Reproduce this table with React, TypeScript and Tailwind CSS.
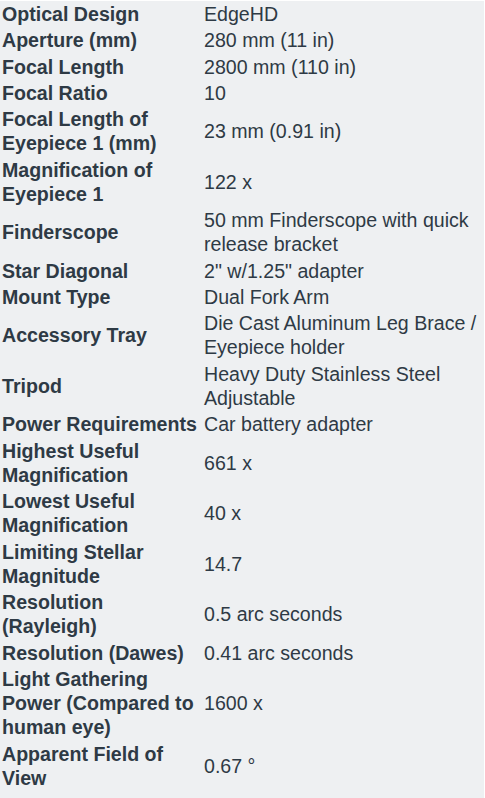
import React from "react";

const rows: [string, string][] = [
  ["Optical Design", "EdgeHD"],
  ["Aperture (mm)", "280 mm (11 in)"],
  ["Focal Length", "2800 mm (110 in)"],
  ["Focal Ratio", "10"],
  ["Focal Length of Eyepiece 1 (mm)", "23 mm (0.91 in)"],
  ["Magnification of Eyepiece 1", "122 x"],
  ["Finderscope", "50 mm Finderscope with quick release bracket"],
  ["Star Diagonal", "2\" w/1.25\" adapter"],
  ["Mount Type", "Dual Fork Arm"],
  ["Accessory Tray", "Die Cast Aluminum Leg Brace / Eyepiece holder"],
  ["Tripod", "Heavy Duty Stainless Steel Adjustable"],
  ["Power Requirements", "Car battery adapter"],
  ["Highest Useful Magnification", "661 x"],
  ["Lowest Useful Magnification", "40 x"],
  ["Limiting Stellar Magnitude", "14.7"],
  ["Resolution (Rayleigh)", "0.5 arc seconds"],
  ["Resolution (Dawes)", "0.41 arc seconds"],
  ["Light Gathering Power (Compared to human eye)", "1600 x"],
  ["Apparent Field of View", "0.67 °"],
];

export default function App() {
  return (
    <div
      className="min-h-[798px] w-[485px] bg-[#eef0f2] border-t border-r border-white pt-[1px] pl-[2px] pr-[1px] text-[#2e3a45] text-[19.6px] leading-[24.27px]"
      style={{ fontFamily: '"Liberation Sans", Arial, sans-serif' }}
    >
      <div className="grid grid-cols-[200px_279px] gap-[2px]">
        {rows.map(([k, v]) => (
          <React.Fragment key={k}>
            <div className="flex items-center font-bold">{k}</div>
            <div className="flex items-center">{v}</div>
          </React.Fragment>
        ))}
      </div>
    </div>
  );
}
